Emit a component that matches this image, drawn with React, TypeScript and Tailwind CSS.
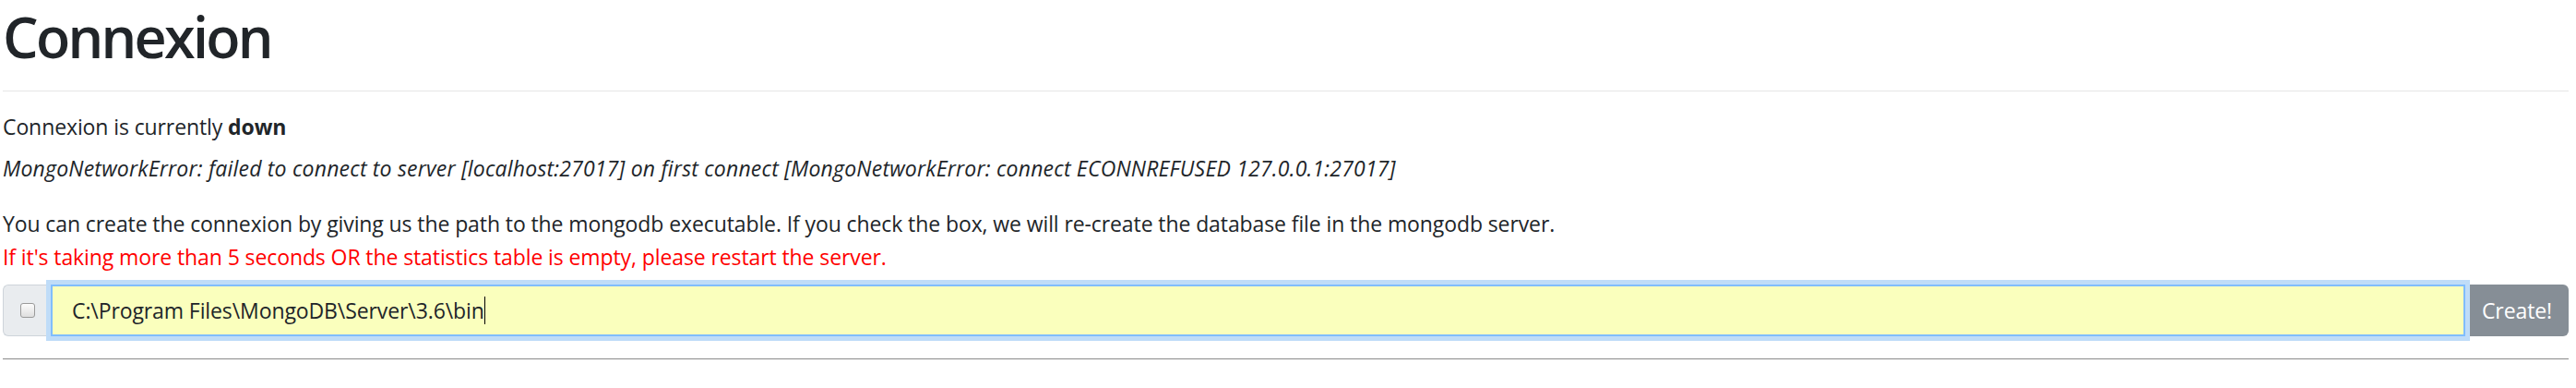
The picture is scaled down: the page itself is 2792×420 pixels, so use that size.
import { FC } from "react";

const Checkbox: FC = () => {
  return (
    <span className="block w-[16px] h-[16px] rounded-[3px] border border-[#9a9a9a] bg-gradient-to-b from-[#fcfcfc] to-[#dedede]" />
  );
};

const App: FC = () => {
  return (
    <div
      className="min-h-[420px] bg-white pl-[3px] pr-[8px] text-[#212529]"
      style={{ fontFamily: '"Open Sans", "Noto Sans", sans-serif' }}
    >
      <h1 className="text-[61px] leading-[1.2] font-semibold tracking-[-2.7px] pt-[3px] m-0">
        Connexion
      </h1>
      <hr className="mt-[22px] border-0 border-t border-[#e6e6e6]" />
      <div className="text-[23px] leading-[36px] tracking-[-0.1px]">
        <p className="mt-[20px]">
          Connexion is currently <strong className="font-bold">down</strong>
        </p>
        <p className="italic mt-[9px] tracking-[0.2px]">
          MongoNetworkError: failed to connect to server [localhost:27017] on first connect
          [MongoNetworkError: connect ECONNREFUSED 127.0.0.1:27017]
        </p>
        <p className="mt-[24px]">
          You can create the connexion by giving us the path to the mongodb executable. If you
          check the box, we will re-create the database file in the mongodb server.
        </p>
        <p className="text-[#ff0000]">
          If it's taking more than 5 seconds OR the statistics table is empty, please restart the
          server.
        </p>
        <div className="flex mt-[12px] h-[56px]">
          <div className="flex items-center justify-center w-[52px] bg-[#e9ecef] border border-[#ced4da] border-r-0 rounded-l-[6px]">
            <Checkbox />
          </div>
          <div className="flex-1 flex items-center bg-[#faffbd] border-2 border-[#80bdff] shadow-[0_0_0_5px_#bfdcf8] relative z-10 pl-[21px]">
            <span>C:\Program Files\MongoDB\Server\3.6\bin</span>
            <span className="inline-block w-[1px] h-[30px] bg-black" />
          </div>
          <button className="w-[112px] bg-[#868e96] text-white rounded-r-[6px] text-[23px]">
            Create!
          </button>
        </div>
        <hr className="mt-[24px] border-0 border-t border-[#8a8a8a]" />
      </div>
    </div>
  );
};

export default App;
